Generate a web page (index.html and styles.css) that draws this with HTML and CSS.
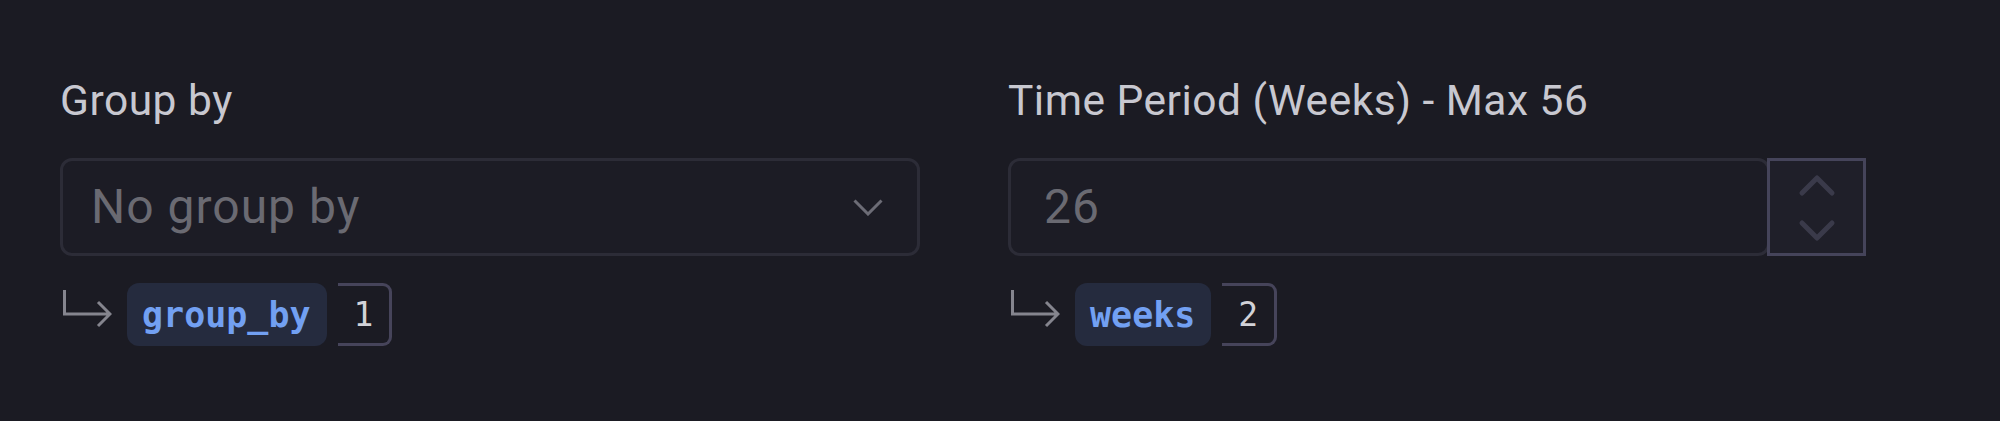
FILE: index.html
```html
<!DOCTYPE html>
<html lang="en">
<head>
<meta charset="utf-8">
<title>Parameters</title>
<link rel="stylesheet" href="styles.css">
</head>
<body>
<div class="page">
  <div class="field">
    <div class="label">Group by</div>
    <div class="select">
      <span class="placeholder">No group by</span>
      <svg class="chevron" width="30" height="17" viewBox="0 0 30 17"><polyline points="1.5,1.5 15,15 28.5,1.5" fill="none" stroke="#6c6c76" stroke-width="3"/></svg>
    </div>
    <div class="binding">
      <svg class="arrow" width="50" height="50" viewBox="0 0 50 50"><path d="M2.5 0 V24 H47 M36 12 L48 24 L36 36" fill="none" stroke="#85858e" stroke-width="3"/></svg>
      <span class="param">group_by</span>
      <span class="index">1</span>
    </div>
  </div>
  <div class="field">
    <div class="label">Time Period (Weeks) - Max 56</div>
    <div class="number">
      <div class="input"><span class="value">26</span></div>
      <div class="stepper">
        <svg width="40" height="72" viewBox="0 0 40 72"><path d="M5 22 L20 7 L35 22 M5 52 L20 67 L35 52" fill="none" stroke="#3a3a4a" stroke-width="5" stroke-linecap="round" stroke-linejoin="round"/></svg>
      </div>
    </div>
    <div class="binding">
      <svg class="arrow" width="50" height="50" viewBox="0 0 50 50"><path d="M2.5 0 V24 H47 M36 12 L48 24 L36 36" fill="none" stroke="#85858e" stroke-width="3"/></svg>
      <span class="param">weeks</span>
      <span class="index">2</span>
    </div>
  </div>
</div>
</body>
</html>
```
FILE: styles.css
```css
html, body {
  margin: 0;
  background: #1b1b23;
}
body {
  font-family: Roboto, "Liberation Sans", sans-serif;
  height: 421px;
  overflow: hidden;
}
.page {
  display: grid;
  grid-template-columns: 860px 858px;
  column-gap: 88px;
  padding: 71px 0 0 60px;
}
.field {
  display: flex;
  flex-direction: column;
}
.label {
  font-size: 42.5px;
  line-height: 60px;
  letter-spacing: 0.5px;
  color: #c8c8d0;
  margin-bottom: 27px;
  white-space: nowrap;
}
.select {
  box-sizing: border-box;
  height: 98px;
  border: 3px solid #2c2c37;
  border-radius: 12px;
  background: #1c1c25;
  display: flex;
  align-items: center;
  justify-content: space-between;
  padding: 0 34px 0 28px;
}
.placeholder, .value {
  font-size: 48px;
  line-height: 1;
  letter-spacing: 1px;
  color: #6a6a72;
}
.number {
  display: flex;
  height: 98px;
}
.input {
  flex: 1;
  box-sizing: border-box;
  border: 3px solid #2c2c37;
  border-radius: 12px;
  background: #1c1c25;
  display: flex;
  align-items: center;
  padding-left: 33px;
}
.stepper {
  box-sizing: border-box;
  width: 99px;
  margin-left: -3px;
  border: 3px solid #45445a;
  background: #1f1f29;
  display: flex;
  align-items: center;
  justify-content: center;
}
.binding {
  display: flex;
  align-items: center;
  margin-top: 27px;
  height: 63px;
}
.arrow {
  margin-left: 2px;
  margin-right: 15px;
}
.param {
  box-sizing: border-box;
  height: 63px;
  display: flex;
  align-items: center;
  padding: 0 16px 0 15px;
  border-radius: 12px;
  background: #252b3e;
  color: #72a0f2;
  font-family: "DejaVu Sans Mono", "Liberation Mono", monospace;
  font-weight: 700;
  font-size: 35px;
}
.index {
  box-sizing: border-box;
  height: 63px;
  margin-left: 11px;
  display: flex;
  align-items: center;
  padding: 0 16px 0 16px;
  border: 3px solid #46445a;
  border-left: none;
  border-radius: 0 9px 9px 0;
  color: #d2d2d8;
  font-family: "DejaVu Sans Mono", "Liberation Mono", monospace;
  font-size: 33px;
}
```
